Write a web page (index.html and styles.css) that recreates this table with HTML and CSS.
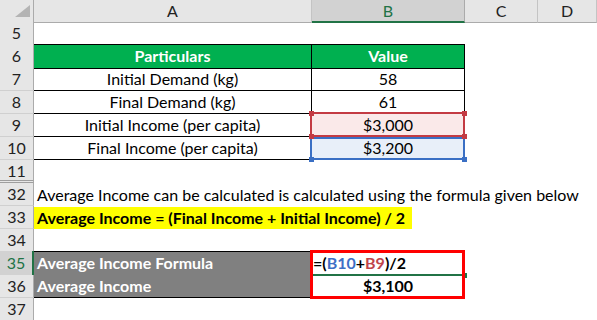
FILE: index.html
```html
<!DOCTYPE html>
<html>
<head>
<meta charset="utf-8">
<link rel="stylesheet" href="styles.css">
</head>
<body>
<div class="sheet">
  <div class="row hdr">
    <div class="corner"><svg width="33" height="21" viewBox="0 0 33 21"><polygon points="30,5 30,17 15,17" fill="#B4B4B4"/></svg></div>
    <div class="ch">A</div>
    <div class="ch sel">B</div>
    <div class="ch">C</div>
    <div class="ch">D</div>
  </div>
  <div class="row h22">
    <div class="rh">5</div><div></div><div></div><div></div><div></div>
  </div>
  <div class="row h24">
    <div class="rh">6</div>
    <div class="t top green">Particulars</div>
    <div class="t top green">Value</div>
    <div></div><div></div>
  </div>
  <div class="row h23">
    <div class="rh">7</div>
    <div class="t">Initial Demand (kg)</div>
    <div class="t">58</div>
    <div></div><div></div>
  </div>
  <div class="row h23">
    <div class="rh">8</div>
    <div class="t">Final Demand (kg)</div>
    <div class="t">61</div>
    <div></div><div></div>
  </div>
  <div class="row h23">
    <div class="rh">9</div>
    <div class="t">Initial Income (per capita)</div>
    <div class="t ref ref-red">$3,000
      <span class="hd hd-tl red"></span><span class="hd hd-tr red"></span>
      <span class="hd hd-bl red"></span><span class="hd hd-br red"></span>
    </div>
    <div></div><div></div>
  </div>
  <div class="row h23">
    <div class="rh">10</div>
    <div class="t">Final Income (per capita)</div>
    <div class="t ref ref-blue">$3,200
      <span class="hd hd-bl blue"></span><span class="hd hd-br blue"></span>
    </div>
    <div></div><div></div>
  </div>
  <div class="row h20">
    <div class="rh nob">11</div><div></div><div></div><div></div><div></div>
  </div>
  <div class="row h3">
    <div class="rh split"></div><div></div><div></div><div></div><div></div>
  </div>
  <div class="row h23">
    <div class="rh">32</div>
    <div class="span">Average Income can be calculated is calculated using the formula given below</div>
  </div>
  <div class="row h23">
    <div class="rh">33</div>
    <div class="span"><span class="hl">Average Income = (Final Income + Initial Income) / 2</span></div>
  </div>
  <div class="row h22">
    <div class="rh">34</div><div></div><div></div><div></div><div></div>
  </div>
  <div class="row h24">
    <div class="rh selrow">35</div>
    <div class="t top gray">Average Income Formula</div>
    <div class="t top left bold active">=(<span class="f-blue">B10</span>+<span class="f-red">B9</span>)/2</div>
    <div></div><div></div>
  </div>
  <div class="row h23">
    <div class="rh">36</div>
    <div class="t gray">Average Income</div>
    <div class="t bold">$3,100</div>
    <div></div><div></div>
  </div>
  <div class="row h23">
    <div class="rh">37</div><div></div><div></div><div></div><div></div>
  </div>
  <div class="redbox"></div>
</div>
</body>
</html>
```

FILE: styles.css
```css
html, body {
  margin: 0;
  padding: 0;
  background: #fff;
}
body {
  font-family: Lato, "Liberation Sans", sans-serif;
  font-size: 16px;
  color: #000;
}
.sheet {
  position: relative;
  width: 597px;
  height: 320px;
  overflow: hidden;
}
.row {
  display: grid;
  grid-template-columns: 34px 278px 153px 73px 59px;
}
.row > div {
  box-sizing: border-box;
  white-space: nowrap;
}
.hdr { height: 22px; }
.h20 { height: 20px; }
.h3 { height: 3px; }
.h22 { height: 22px; }
.h23 { height: 23px; }
.h24 { height: 24px; }

.corner {
  background: #E6E6E6;
  border-right: 1px solid #ABABAB;
  border-bottom: 1px solid #ABABAB;
}
.corner svg { display: block; }
.ch {
  background: #E6E6E6;
  border-right: 1px solid #C4C4C4;
  border-bottom: 1px solid #ABABAB;
  text-align: center;
  line-height: 21px;
  color: #222;
}
.ch.sel {
  background: #D2D2D2;
  color: #217346;
  border-bottom: 2px solid #217346;
  border-right-color: #ABABAB;
}
.rh {
  background: #E6E6E6;
  border-right: 1px solid #ABABAB;
  border-bottom: 1px solid #D0D0D0;
  text-align: center;
  color: #222;
  line-height: 22px;
}
.h24 .rh { line-height: 24px; }
.h20 .rh { line-height: 21px; }
.rh.nob { border-bottom: none; }
.rh.split {
  border-top: 1px solid #9E9E9E;
  border-bottom: 1px solid #9E9E9E;
  background: #E6E6E6;
}
.rh.selrow {
  background: #D2D2D2;
  color: #217346;
  border-right: 2px solid #217346;
}

.t {
  border-right: 1px solid #000;
  border-bottom: 1px solid #000;
  text-align: center;
  line-height: 22px;
}
.t.top { border-top: 1px solid #000; }
.green {
  background: #00B050;
  color: #fff;
  font-weight: bold;
}
.gray {
  background: #808080;
  color: #fff;
  font-weight: bold;
  text-align: left;
  padding-left: 3px;
}
.left {
  text-align: left;
  padding-left: 1px;
}
.bold { font-weight: bold; }
.f-blue { color: #3E6FC6; }
.f-red { color: #C0444A; }

.ref { position: relative; }
.ref::after {
  content: "";
  position: absolute;
  left: -2px;
  top: -2px;
  right: -1px;
  bottom: -1px;
  border: 2px solid;
  pointer-events: none;
}
.ref-red { background: #FAE9E9; }
.ref-red::after { border-color: #C33B43; }
.ref-blue { background: #E8EFF9; }
.ref-blue::after { border-color: #3A6FC4; top: 0; }
.hd {
  position: absolute;
  width: 5px;
  height: 5px;
  z-index: 2;
}
.hd.red { background: #C33B43; }
.hd.blue { background: #3A6FC4; }
.hd-tl { left: -3px; top: -3px; }
.hd-tr { right: -3px; top: -3px; }
.hd-bl { left: -3px; bottom: -3px; }
.hd-br { right: -3px; bottom: -3px; }

.active { position: relative; }
.active::after {
  content: "";
  position: absolute;
  left: -1px;
  right: -2px;
  bottom: -1px;
  height: 2px;
  background: #217346;
}
.active::before {
  content: "";
  position: absolute;
  right: -3px;
  bottom: -3px;
  width: 5px;
  height: 5px;
  background: #217346;
  z-index: 1;
}

.span {
  grid-column: 2 / -1;
  padding-left: 3px;
  line-height: 23px;
}
.hl {
  display: inline-block;
  background: #FFFF00;
  font-weight: bold;
  width: 378px;
  height: 22px;
  line-height: 22px;
  margin-left: -3px;
  padding-left: 3px;
  box-sizing: border-box;
}
.redbox {
  position: absolute;
  left: 310px;
  top: 250px;
  width: 155px;
  height: 49px;
  border: 3px solid #FF0000;
  box-sizing: border-box;
  z-index: 3;
}
```
